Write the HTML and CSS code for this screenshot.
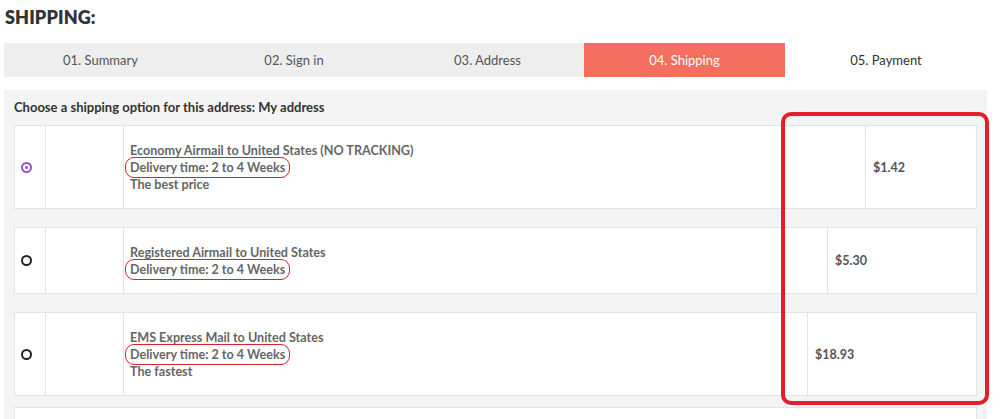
FILE: index.html
```html
<!DOCTYPE html>
<html lang="en">
<head>
<meta charset="utf-8">
<title>Shipping</title>
<link rel="stylesheet" href="styles.css">
</head>
<body>
<div class="page">
  <h1 class="title">SHIPPING:</h1>
  <ul class="steps">
    <li class="step">01. Summary</li>
    <li class="step">02. Sign in</li>
    <li class="step">03. Address</li>
    <li class="step step-current">04. Shipping</li>
    <li class="step step-todo">05. Payment</li>
  </ul>
  <div class="panel">
    <p class="panel-head">Choose a shipping option for this address: My address</p>
    <div class="option option-1">
      <div class="cell cell-radio"><span class="radio radio-checked"></span></div>
      <div class="cell cell-img"></div>
      <div class="cell cell-text">
        <div>Economy Airmail to United States (NO TRACKING)</div>
        <div><span class="mark">Delivery time: 2 to 4 Weeks</span></div>
        <div>The best price</div>
      </div>
      <div class="cell cell-price price-1">$1.42</div>
    </div>
    <div class="option option-2">
      <div class="cell cell-radio"><span class="radio"></span></div>
      <div class="cell cell-img"></div>
      <div class="cell cell-text">
        <div>Registered Airmail to United States</div>
        <div><span class="mark">Delivery time: 2 to 4 Weeks</span></div>
      </div>
      <div class="cell cell-price price-2">$5.30</div>
    </div>
    <div class="option option-3">
      <div class="cell cell-radio"><span class="radio"></span></div>
      <div class="cell cell-img"></div>
      <div class="cell cell-text">
        <div>EMS Express Mail to United States</div>
        <div><span class="mark">Delivery time: 2 to 4 Weeks</span></div>
        <div>The fastest</div>
      </div>
      <div class="cell cell-price price-3">$18.93</div>
    </div>
    <div class="option option-4"></div>
  </div>
  <div class="price-highlight"></div>
</div>
</body>
</html>
```
FILE: styles.css
```css
* { box-sizing: border-box; }
html, body { margin: 0; padding: 0; background: #fff; }
body {
  font-family: Lato, "Open Sans", "Liberation Sans", sans-serif;
  color: #333;
  height: 419px;
  overflow: hidden;
}
.page {
  position: relative;
  padding: 0 0 0 4px;
  width: 991px;
}
.title {
  margin: 0;
  padding: 6px 0 0 1px;
  font-size: 18px;
  line-height: 22px;
  font-weight: 800;
  color: #333;
  letter-spacing: 0.1px;
}
.steps {
  list-style: none;
  margin: 15px 0 0 0;
  padding: 0;
  display: grid;
  grid-template-columns: 193px 194px 193px 201px 202px;
  height: 34px;
}
.step {
  background: #eeeeee;
  display: flex;
  align-items: center;
  justify-content: center;
  font-size: 13px;
  color: #555;
}
.step-current { background: #f46f5f; color: #fff; }
.step-todo { background: #fff; color: #333; }
.panel {
  margin-top: 13px;
  width: 983px;
  background: #f4f4f4;
  padding: 9px 10px 0 10px;
  height: 340px;
}
.panel-head {
  margin: 0 0 9px 0;
  font-size: 13px;
  line-height: 17px;
  font-weight: 700;
  color: #333;
}
.option {
  display: flex;
  background: #fff;
  border: 1px solid #e3e3e3;
  width: 963px;
}
.option-1 { height: 84px; }
.option-2 { height: 67px; margin-top: 18px; }
.option-3 { height: 84px; margin-top: 18px; }
.option-4 { height: 20px; margin-top: 11px; border-bottom: 0; }
.cell {
  display: flex;
  flex-direction: column;
  justify-content: center;
}
.cell-radio {
  width: 31px;
  align-items: flex-start;
  padding-left: 6px;
  border-right: 1px solid #e3e3e3;
}
.cell-img { width: 78px; border-right: 1px solid #e3e3e3; }
.cell-text {
  flex: 1;
  padding-left: 6px;
  font-size: 12.6px;
  line-height: 17px;
  font-weight: 700;
  color: #666;
}
.cell-price {
  border-left: 1px solid #e3e3e3;
  padding-left: 7px;
  font-size: 12.5px;
  font-weight: 700;
  color: #555;
}
.price-1 { width: 111px; }
.price-2 { width: 149px; }
.price-3 { width: 169px; }
.radio {
  display: block;
  width: 11px;
  height: 11px;
  border-radius: 50%;
  border: 2px solid #222;
}
.radio-checked {
  border-color: #9b4fc4;
  position: relative;
}
.radio-checked::after {
  content: "";
  position: absolute;
  left: 50%;
  top: 50%;
  width: 3px;
  height: 3px;
  margin: -1.5px 0 0 -1.5px;
  border-radius: 50%;
  background: #9b4fc4;
}
.mark {
  position: relative;
  display: inline-block;
}
.mark::after {
  content: "";
  position: absolute;
  left: -5px;
  right: -5px;
  top: -2px;
  bottom: -2px;
  border: 1.6px solid #d8232e;
  border-radius: 9px;
}
.price-highlight {
  position: absolute;
  left: 781px;
  top: 112px;
  width: 208px;
  height: 293px;
  border: 4px solid #e61e28;
  border-radius: 10px;
}
```
